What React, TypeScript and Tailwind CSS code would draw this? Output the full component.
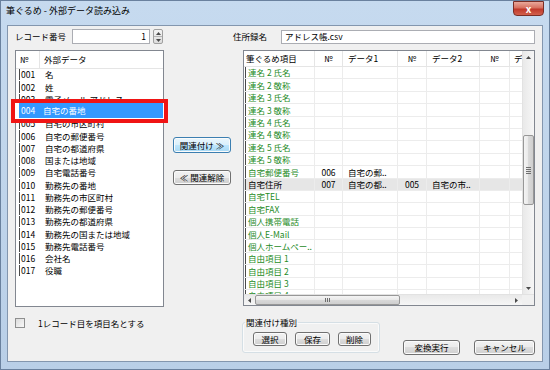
import React from "react";
import clsx from "clsx";

type GridRow = {
    name: string;
    green: boolean;
    no1?: string;
    d1?: string;
    no2?: string;
    d2?: string;
    hl?: boolean;
};

const sourceRows: [string, string][] = [
    ["001", "名"],
    ["002", "姓"],
    ["003", "電子メール アドレス"],
    ["004", "自宅の番地"],
    ["005", "自宅の市区町村"],
    ["006", "自宅の郵便番号"],
    ["007", "自宅の都道府県"],
    ["008", "国または地域"],
    ["009", "自宅電話番号"],
    ["010", "勤務先の番地"],
    ["011", "勤務先の市区町村"],
    ["012", "勤務先の郵便番号"],
    ["013", "勤務先の都道府県"],
    ["014", "勤務先の国または地域"],
    ["015", "勤務先電話番号"],
    ["016", "会社名"],
    ["017", "役職"],
];

const gridRows: GridRow[] = [
    { name: "連名 2 氏名", green: true },
    { name: "連名 2 敬称", green: true },
    { name: "連名 3 氏名", green: true },
    { name: "連名 3 敬称", green: true },
    { name: "連名 4 氏名", green: true },
    { name: "連名 4 敬称", green: true },
    { name: "連名 5 氏名", green: true },
    { name: "連名 5 敬称", green: true },
    { name: "自宅郵便番号", green: true, no1: "006", d1: "自宅の郵.." },
    { name: "自宅住所", green: false, no1: "007", d1: "自宅の都..", no2: "005", d2: "自宅の市..", hl: true },
    { name: "自宅TEL", green: true },
    { name: "自宅FAX", green: true },
    { name: "個人携帯電話", green: true },
    { name: "個人E-Mail", green: true },
    { name: "個人ホームペー..", green: true },
    { name: "自由項目 1", green: true },
    { name: "自由項目 2", green: true },
    { name: "自由項目 3", green: true },
    { name: "自由項目 4", green: true },
];

function WinButton({
    children,
    className,
    primary,
}: {
    children: React.ReactNode;
    className?: string;
    primary?: boolean;
}) {
    return (
        <button
            type="button"
            className={clsx(
                "flex items-center justify-center rounded-[3px] border text-[8.5px] leading-none text-black shadow-[inset_0_0_0_1px_#fbfbfb]",
                primary
                    ? "border-[#3c7fb1] bg-[linear-gradient(#eaf6fd_0%,#d9f0fc_50%,#bee6fd_50%,#a7d9f5_100%)]"
                    : "border-[#707070] bg-[linear-gradient(#f2f2f2_0%,#ebebeb_50%,#dddddd_50%,#cfcfcf_100%)]",
                className
            )}
        >
            {children}
        </button>
    );
}

function Arrow({ dir }: { dir: "up" | "down" | "left" | "right" }) {
    const pts = {
        up: "0,3 2.5,0 5,3",
        down: "0,0 2.5,3 5,0",
        left: "3,0 0,2.5 3,5",
        right: "0,0 3,2.5 0,5",
    }[dir];
    const vertical = dir === "up" || dir === "down";
    return (
        <svg width={vertical ? 5 : 3} height={vertical ? 3 : 5} viewBox={vertical ? "0 0 5 3" : "0 0 3 5"}>
            <polygon points={pts} fill="#4a4a4a" />
        </svg>
    );
}

const colW = ["w-[71px]", "w-[28px]", "w-[55px]", "w-[29px]", "w-[53px]", "w-[30px]", "w-[12px]"];

export default function App() {
    return (
        <div className="relative w-[550px] h-[370px] flex flex-col overflow-hidden bg-[linear-gradient(180deg,#c6daef_0%,#b9cfe7_100%)] shadow-[inset_0_0_0_1px_#6a819e] font-['Noto_Sans_CJK_JP','Noto_Sans',sans-serif] text-black">
            {/* Title bar */}
            <div className="h-[25px] flex items-start justify-between">
                <span className="pl-[6px] pt-[6px] text-[9px] leading-none">筆ぐるめ - 外部データ読み込み</span>
                <div className="mr-[6px] mt-[1px] w-[31px] h-[15px] rounded-b-[4px] border border-[#7a2e26] bg-[linear-gradient(#e9a89b_0%,#d7705f_45%,#c0392b_55%,#d2604c_100%)] flex items-center justify-center">
                    <span className="text-[10px] font-bold leading-none text-white">x</span>
                </div>
            </div>

            {/* Client area */}
            <div className="mx-[7px] h-[337px] border border-[#8396ae] bg-[#f0f0f0] flex pl-[7px] pt-[3px]">
                {/* Left column */}
                <div className="w-[149px] flex flex-col">
                    <div className="h-[15px] flex items-center">
                        <span className="w-[57px] text-[8.5px] leading-none">レコード番号</span>
                        <div className="w-[78px] h-[15px] border border-[#abadb3] bg-white flex items-center justify-end pr-[3px] text-[8.5px] leading-none">
                            1
                        </div>
                        <div className="ml-[3px] w-[10px] h-[15px] flex flex-col border border-[#a0a0a0] rounded-[2px] bg-[linear-gradient(#f4f4f4,#dcdcdc)]">
                            <div className="flex-1 flex items-center justify-center border-b border-[#b5b5b5]">
                                <Arrow dir="up" />
                            </div>
                            <div className="flex-1 flex items-center justify-center">
                                <Arrow dir="down" />
                            </div>
                        </div>
                    </div>

                    <div className="mt-[6px] h-[257px] border border-[#828790] bg-white flex flex-col overflow-hidden">
                        <div className="h-[18px] flex border-b border-[#e5e5e5] text-[8.5px] leading-none">
                            <div className="w-[24px] pl-[4px] flex items-center border-r border-[#e5e5e5]">№</div>
                            <div className="pl-[4px] flex items-center">外部データ</div>
                        </div>
                        {sourceRows.map(([no, name]) => (
                            <div key={no} className="h-[12.25px] flex items-stretch pl-[3px] text-[8.5px] leading-none">
                                <div
                                    className={clsx(
                                        "flex flex-1 items-center border-l border-[#4a4a4a] mb-[1px]",
                                        no === "004" && "bg-[#3399ff] text-white"
                                    )}
                                >
                                    <span className="w-[20px] pl-[1px]">{no}</span>
                                    <span className="pl-[5px]">{name}</span>
                                </div>
                            </div>
                        ))}
                    </div>

                    <div className="mt-[11px] h-[10px] flex items-center">
                        <div className="w-[10px] h-[10px] border border-[#8e8f8f] bg-[linear-gradient(135deg,#dcdcdc,#f8f8f8)]" />
                        <span className="ml-[13px] text-[8.5px] leading-none">1レコード目を項目名とする</span>
                    </div>
                </div>

                {/* Middle buttons */}
                <div className="ml-[9px] w-[58px] flex flex-col pt-[108px]">
                    <WinButton primary className="h-[16px] w-full">関連付け ≫</WinButton>
                    <WinButton className="mt-[17px] h-[15px] w-full">≪ 関連解除</WinButton>
                </div>

                {/* Right column */}
                <div className="ml-[2px] w-[302px] flex flex-col">
                    <div className="h-[15px] flex items-center">
                        <span className="w-[48px] text-[8.5px] leading-none">住所録名</span>
                        <div className="flex-1 h-[14px] border border-[#abadb3] bg-white flex items-center pl-[3px] text-[8.5px] leading-none">
                            アドレス帳.csv
                        </div>
                    </div>

                    {/* Mapping grid */}
                    <div className="mt-[6px] ml-[10px] w-[292px] h-[256px] border border-[#828790] bg-white flex flex-col">
                        <div className="h-[243px] flex">
                            <div className="w-[278px] flex flex-col overflow-hidden">
                                <div className="h-[16px] shrink-0 flex border-b border-[#e5e5e5] text-[8.5px] leading-none">
                                    <div className={clsx(colW[0], "pl-[2px] flex items-center border-r border-[#e5e5e5] whitespace-nowrap")}>筆ぐるめ項目</div>
                                    <div className={clsx(colW[1], "flex items-center justify-center border-r border-[#e5e5e5]")}>№</div>
                                    <div className={clsx(colW[2], "pl-[5px] flex items-center border-r border-[#e5e5e5]")}>データ1</div>
                                    <div className={clsx(colW[3], "flex items-center justify-center border-r border-[#e5e5e5]")}>№</div>
                                    <div className={clsx(colW[4], "pl-[5px] flex items-center border-r border-[#e5e5e5]")}>データ2</div>
                                    <div className={clsx(colW[5], "flex items-center justify-center border-r border-[#e5e5e5]")}>№</div>
                                    <div className={clsx(colW[6], "pl-[4px] flex items-center overflow-hidden whitespace-nowrap")}>デ</div>
                                </div>
                                {gridRows.map((r) => (
                                    <div
                                        key={r.name}
                                        className={clsx(
                                            "h-[12.4px] shrink-0 flex border-b border-[#ececec] text-[8.5px] leading-none",
                                            r.hl ? "bg-[#e6e6e6]" : "bg-white"
                                        )}
                                    >
                                        <div className={clsx(colW[0], "flex items-stretch border-r border-[#ececec] whitespace-nowrap")}>
                                            <div
                                                className={clsx(
                                                    "ml-[1px] pl-[2px] flex items-center border-l border-[#4a4a4a]",
                                                    r.green ? "text-[#1f8c1f]" : "text-black"
                                                )}
                                            >
                                                {r.name}
                                            </div>
                                        </div>
                                        <div className={clsx(colW[1], "flex items-center justify-center border-r border-[#ececec]")}>{r.no1}</div>
                                        <div className={clsx(colW[2], "pl-[5px] flex items-center border-r border-[#ececec] whitespace-nowrap")}>{r.d1}</div>
                                        <div className={clsx(colW[3], "flex items-center justify-center border-r border-[#ececec]")}>{r.no2}</div>
                                        <div className={clsx(colW[4], "pl-[5px] flex items-center border-r border-[#ececec] whitespace-nowrap")}>{r.d2}</div>
                                        <div className={clsx(colW[5], "border-r border-[#ececec]")} />
                                        <div className={colW[6]} />
                                    </div>
                                ))}
                            </div>

                            {/* Vertical scrollbar */}
                            <div className="w-[12px] flex flex-col bg-[linear-gradient(90deg,#e9e9e9,#f6f6f6)] border-l border-[#e2e2e2]">
                                <div className="h-[12px] flex items-center justify-center">
                                    <Arrow dir="up" />
                                </div>
                                <div className="mt-[72px] h-[70px] rounded-[2px] border border-[#979797] bg-[linear-gradient(90deg,#f4f4f4_0%,#e8e8e8_50%,#d9d9d9_50%,#cfcfcf_100%)] flex flex-col items-center justify-center gap-[1px]">
                                    <div className="w-[5px] h-[1px] bg-[#6e6e6e]" />
                                    <div className="w-[5px] h-[1px] bg-[#6e6e6e]" />
                                    <div className="w-[5px] h-[1px] bg-[#6e6e6e]" />
                                    <div className="w-[5px] h-[1px] bg-[#6e6e6e]" />
                                </div>
                                <div className="flex-1" />
                                <div className="h-[12px] flex items-center justify-center">
                                    <Arrow dir="down" />
                                </div>
                            </div>
                        </div>

                        {/* Horizontal scrollbar */}
                        <div className="h-[11px] flex border-t border-[#e2e2e2]">
                            <div className="w-[278px] flex bg-[linear-gradient(#e9e9e9,#f6f6f6)]">
                                <div className="w-[11px] flex items-center justify-center">
                                    <Arrow dir="left" />
                                </div>
                                <div className="w-[145px] rounded-[2px] border border-[#979797] bg-[linear-gradient(#f4f4f4_0%,#e8e8e8_50%,#d9d9d9_50%,#cfcfcf_100%)] flex items-center justify-center gap-[1px]">
                                    <div className="w-[1px] h-[4px] bg-[#6e6e6e]" />
                                    <div className="w-[1px] h-[4px] bg-[#6e6e6e]" />
                                    <div className="w-[1px] h-[4px] bg-[#6e6e6e]" />
                                </div>
                                <div className="flex-1" />
                                <div className="w-[11px] flex items-center justify-center">
                                    <Arrow dir="right" />
                                </div>
                            </div>
                            <div className="w-[12px] bg-[#f0f0f0]" />
                        </div>
                    </div>

                    {/* Bottom controls */}
                    <div className="mt-[10px] flex">
                        <fieldset className="ml-[9px] w-[138px] h-[37px] rounded-[3px] border border-[#d5dfe5] shadow-[inset_0_0_0_1px_#fafafa]">
                            <legend className="ml-[2px] px-[1px] text-[8.5px] leading-[12px]">関連付け種別</legend>
                            <div className="ml-[10px] mt-[4px] flex gap-[8px]">
                                <WinButton className="w-[34px] h-[14px]">選択</WinButton>
                                <WinButton className="w-[35px] h-[14px]">保存</WinButton>
                                <WinButton className="w-[33px] h-[14px]">削除</WinButton>
                            </div>
                        </fieldset>
                        <div className="ml-[23px] mt-[24px] flex gap-[14px]">
                            <WinButton className="w-[57px] h-[15px]">変換実行</WinButton>
                            <WinButton className="w-[61px] h-[15px]">キャンセル</WinButton>
                        </div>
                    </div>
                </div>
            </div>

            {/* Annotation around the selected row */}
            <div className="absolute left-[11px] top-[99px] w-[157px] h-[24px] border-[4px] border-[#f01414] bg-white pl-[4px]">
                <div className="w-[144px] h-[15px] bg-[#3399ff] flex items-center text-[8.5px] leading-none text-white">
                    <span className="w-[24px] pl-[2px]">004</span>
                    <span>自宅の番地</span>
                </div>
            </div>
        </div>
    );
}
